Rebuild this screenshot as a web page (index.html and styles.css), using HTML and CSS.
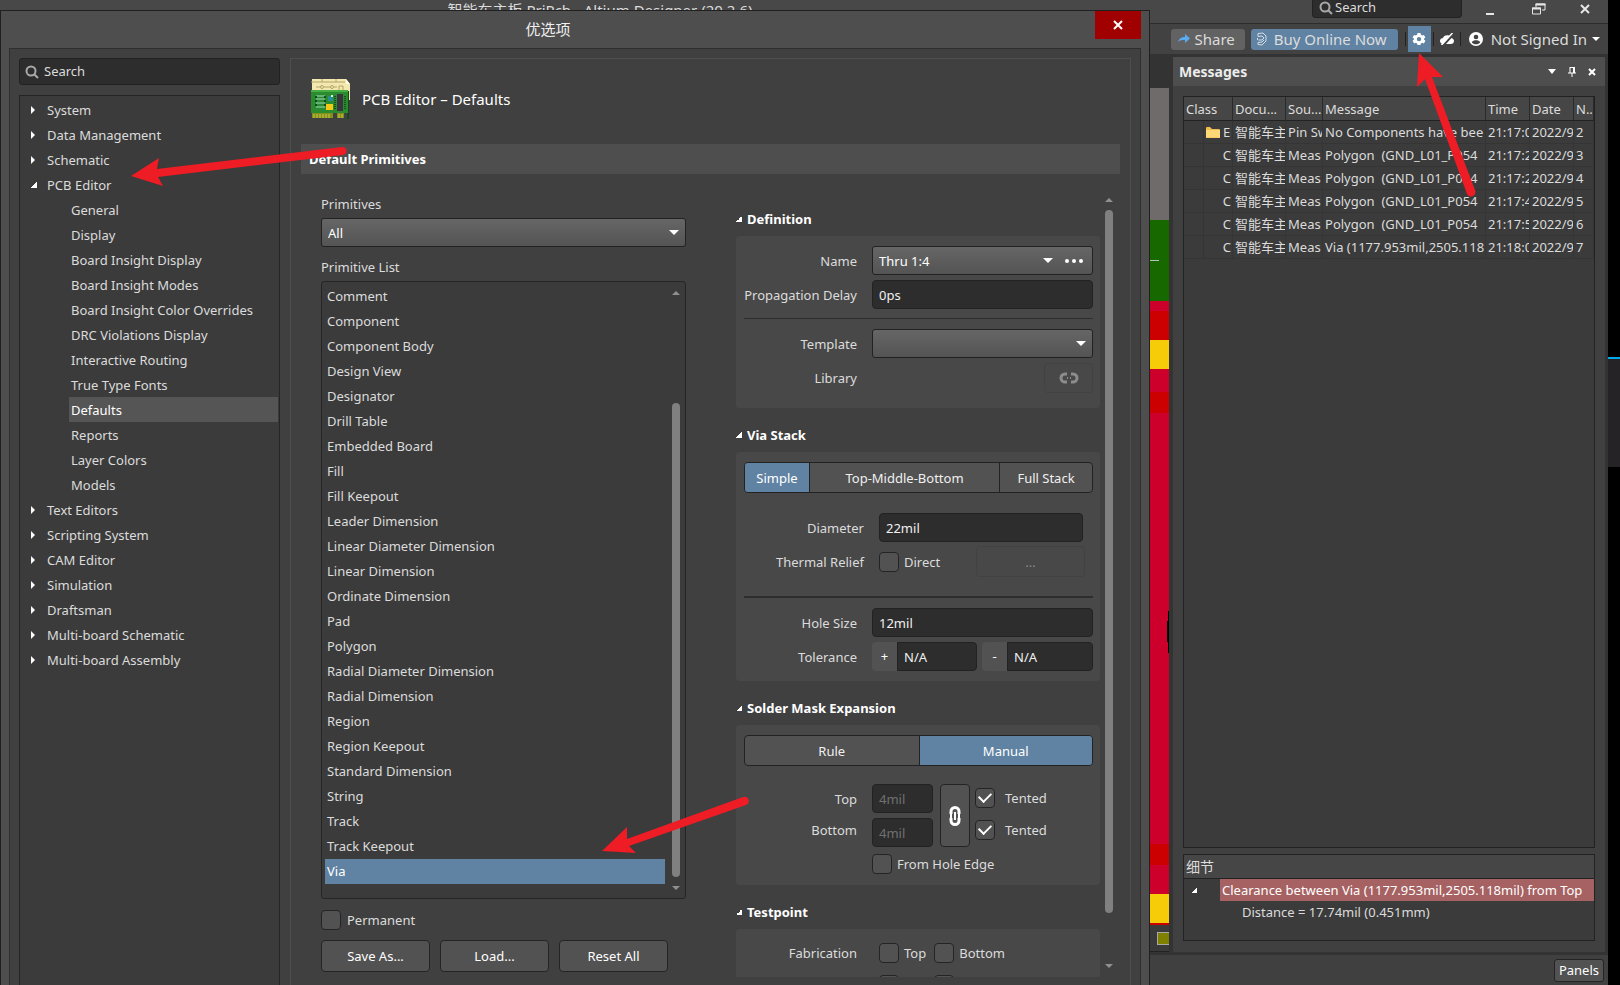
FILE: index.html
```html
<!DOCTYPE html>
<html lang="zh-CN">
<head>
<meta charset="utf-8">
<title>Altium Designer</title>
<link rel="stylesheet" href="styles.css">
</head>
<body>
<div class="desktop">
  <div class="app">
    <header class="titlebar">
      <div class="titlebar-text">智能车主板.PrjPcb - Altium Designer (20.2.6)</div>
      <div class="titlebar-side">
        <label class="app-search">
          <svg class="icon-search" viewBox="0 0 14 14" width="14" height="14"><circle cx="6" cy="6" r="4.5"/><path d="M9.2 9.2 13 13"/></svg>
          <input type="text" value="Search" aria-label="Search">
        </label>
        <button class="win-btn" aria-label="Minimize"><svg viewBox="0 0 12 12" width="12" height="12"><path d="M3 11h8" stroke="#e6e6e6" stroke-width="2"/></svg></button>
        <button class="win-btn" aria-label="Restore"><svg viewBox="0 0 14 12" width="14" height="12"><path d="M4 4V1h9v6h-3" class="win-line"/><path d="M3.500 1.500h10M0 5.500h9" stroke="#e6e6e6" stroke-width="2"/><path d="M.5 5h8v6h-8z" class="win-line"/></svg></button>
        <button class="win-btn" aria-label="Close"><svg viewBox="0 0 10 10" width="10" height="10"><path d="M1 1l8 8M9 1 1 9" stroke="#e6e6e6" stroke-width="2"/></svg></button>
      </div>
    </header>
    <div class="toolbar">
      <button class="tb-share"><svg viewBox="0 0 12 10" width="12" height="10"><path d="M0 8C1 4 4 3 7 3V0l5 4.500L7 9V6C4 6 2 6 0 8z" fill="#5aaaf0"/></svg>Share</button>
      <button class="tb-buy"><svg viewBox="0 0 12 14" width="12" height="14" fill="none" stroke="#d4dce4"><path d="M2 1.500 7 1l3 3v5l-4 4-4-.5"/><path d="M2 1.500v3l4-.5 2 2-2 2H2.500M2 12.500v-2l4-.5 2-2M1.500 6v2"/></svg>Buy Online Now</button>
      <span class="tb-sep"></span>
      <button class="tb-gear" aria-label="Settings"><svg viewBox="0 0 14 14" width="14" height="14"><path fill="#fff" fill-rule="evenodd" d="M5.500 1h3l.4 1.800 1.300.7 1.700-.6 1.500 2.600L12 6.700v.9l1.400 1.200-1.500 2.600-1.700-.6-1.300.7L8.500 13h-3l-.4-1.500-1.300-.7-1.700.6L.6 8.800 2 7.600v-.9L.6 5.500l1.500-2.600 1.700.6 1.300-.7zM7 4.900a2.200 2.200 0 1 0 0 4.400 2.200 2.200 0 0 0 0-4.400z"/></svg></button>
      <span class="tb-sep"></span>
      <button class="tb-icon" aria-label="Offline"><svg viewBox="0 0 14 12" width="14" height="12"><path fill="#fff" d="M0 8c0-2 1.500-3 3-3 .5-2 3-3.500 6-2.500l1 .5L3 11C1 11 0 9.500 0 8zM11.500 5C13 5.500 14 6.500 14 8c0 2-1.500 3-3 3H6z"/><path d="M1.500 12 12.500 0" stroke="#fff" stroke-width="1.500"/></svg></button>
      <span class="tb-sep"></span>
      <button class="tb-user"><svg viewBox="0 0 14 14" width="14" height="14"><circle cx="7" cy="7" r="7" fill="#fff"/><circle cx="7" cy="5" r="2.300" fill="#424242"/><path d="M2.800 10.200C3.600 8.600 5.200 8.200 7 8.200s3.400.4 4.200 2C10.200 11.600 8.700 12.200 7 12.200s-3.200-.6-4.200-2z" fill="#424242"/></svg><span>Not Signed In</span><i class="caret-down"></i></button>
    </div>
    <main class="workspace">
      <svg class="board" viewBox="0 0 19 898" preserveAspectRatio="none" aria-hidden="true">
        <rect width="19" height="898" fill="#333"/>
        <rect y="34" width="19" height="132" fill="#706b6b"/>
        <rect y="166" width="19" height="81" fill="#186800"/>
        <rect y="206" width="9" height="1" fill="#b5c4b0"/>
        <rect y="247" width="19" height="600" fill="#cc002b"/>
        <rect y="257" width="19" height="29" fill="#cc0000"/>
        <rect y="286" width="19" height="29" fill="#f6cc08"/>
        <rect y="338" width="19" height="21" fill="#cc0000"/>
        <path d="M19 557h-1v10h-1v21h1v11h1z" fill="#000"/>
        <rect y="790" width="19" height="21" fill="#cc0000"/>
        <rect y="840" width="19" height="30" fill="#f6cc08"/>
        <rect y="869" width="19" height="2" fill="#cc0000"/>
        <rect y="871" width="19" height="27" fill="#3a3a3a"/>
        <path d="M7 878h12v13H7z" fill="#a8a8a8"/><path d="M8 879h11v11H8z" fill="#808000"/>
        <rect y="897" width="19" height="1" fill="#222"/>
      </svg>
      <section class="messages">
        <div class="panel-head">
          <h2>Messages</h2>
          <button aria-label="Menu"><i class="caret-down small"></i></button>
          <button aria-label="Pin"><svg viewBox="0 0 8 10" width="8" height="10"><path d="M2 0.500h4.500V6M2 0v6M0 6h8M4 6v4" stroke="#fff" fill="none"/><path d="M5 0h2v6H5z" fill="#fff"/></svg></button>
          <button aria-label="Close"><svg viewBox="0 0 8 8" width="8" height="8"><path d="M1 1l6 6M7 1 1 7" stroke="#fff" stroke-width="2"/></svg></button>
        </div>
        <div class="msg-table-wrap">
          <table class="msg-table">
            <colgroup><col class="c-tick"><col class="c-class"><col class="c-doc"><col class="c-src"><col><col class="c-time"><col class="c-time"><col class="c-no"></colgroup>
            <thead><tr><th colspan="2">Class</th><th>Docu...</th><th>Sou...</th><th>Message</th><th>Time</th><th>Date</th><th>N..</th></tr></thead>
            <tbody>
              <tr><td></td><td class="cls"><div><svg viewBox="0 0 14 12" width="14" height="12"><path d="M0 2q0-1 1-1h3l2 2h7q1 0 1 1v8H0z" fill="#f0bc4e"/><path d="M0 4h14v7.500H0z" fill="#ffd877"/></svg><span>Er</span></div></td><td>智能车主</td><td>Pin Sw</td><td>No Components have bee</td><td>21:17:0</td><td>2022/9</td><td>2</td></tr>
              <tr><td></td><td class="cls"><div><span>C</span></div></td><td>智能车主</td><td>Meas</td><td>Polygon&nbsp; (GND_L01_P054</td><td>21:17:2</td><td>2022/9</td><td>3</td></tr>
              <tr><td></td><td class="cls"><div><span>C</span></div></td><td>智能车主</td><td>Meas</td><td>Polygon&nbsp; (GND_L01_P054</td><td>21:17:2</td><td>2022/9</td><td>4</td></tr>
              <tr><td></td><td class="cls"><div><span>C</span></div></td><td>智能车主</td><td>Meas</td><td>Polygon&nbsp; (GND_L01_P054</td><td>21:17:4</td><td>2022/9</td><td>5</td></tr>
              <tr><td></td><td class="cls"><div><span>C</span></div></td><td>智能车主</td><td>Meas</td><td>Polygon&nbsp; (GND_L01_P054</td><td>21:17:5</td><td>2022/9</td><td>6</td></tr>
              <tr><td></td><td class="cls"><div><span>C</span></div></td><td>智能车主</td><td>Meas</td><td>Via (1177.953mil,2505.118</td><td>21:18:0</td><td>2022/9</td><td>7</td></tr>
            </tbody>
          </table>
        </div>
        <div class="details">
          <div class="details-head">细节</div>
          <div class="details-row"><i class="tri-open"></i><span class="hit">Clearance between Via (1177.953mil,2505.118mil) from Top</span></div>
          <div class="details-sub">Distance = 17.74mil (0.451mm)</div>
        </div>
      </section>
    </main>
    <footer class="statusbar"><button>Panels</button></footer>

    <div class="dialog" role="dialog" aria-label="优选项">
      <div class="dialog-title"><span>优选项</span><button aria-label="Close"><svg viewBox="0 0 10 10" width="10" height="10"><path d="M1 1l8 8M9 1 1 9" stroke="#fff" stroke-width="2"/></svg></button></div>
      <div class="dialog-body">
        <nav class="side">
          <label class="side-search">
            <svg class="icon-search" viewBox="0 0 14 14" width="14" height="14"><circle cx="6" cy="6" r="4.500"/><path d="M9.200 9.200 13 13"/></svg>
            <input type="text" value="Search" aria-label="Search preferences">
          </label>
          <ul class="tree">
            <li class="node"><i class="tri-closed"></i>System</li>
            <li class="node"><i class="tri-closed"></i>Data Management</li>
            <li class="node"><i class="tri-closed"></i>Schematic</li>
            <li class="node"><i class="tri-open"></i>PCB Editor</li>
            <li class="leaf">General</li>
            <li class="leaf">Display</li>
            <li class="leaf">Board Insight Display</li>
            <li class="leaf">Board Insight Modes</li>
            <li class="leaf">Board Insight Color Overrides</li>
            <li class="leaf">DRC Violations Display</li>
            <li class="leaf">Interactive Routing</li>
            <li class="leaf">True Type Fonts</li>
            <li class="leaf selected">Defaults</li>
            <li class="leaf">Reports</li>
            <li class="leaf">Layer Colors</li>
            <li class="leaf">Models</li>
            <li class="node"><i class="tri-closed"></i>Text Editors</li>
            <li class="node"><i class="tri-closed"></i>Scripting System</li>
            <li class="node"><i class="tri-closed"></i>CAM Editor</li>
            <li class="node"><i class="tri-closed"></i>Simulation</li>
            <li class="node"><i class="tri-closed"></i>Draftsman</li>
            <li class="node"><i class="tri-closed"></i>Multi-board Schematic</li>
            <li class="node"><i class="tri-closed"></i>Multi-board Assembly</li>
          </ul>
        </nav>
        <section class="page">
          <div class="page-head">
            <svg viewBox="0 0 40 40" width="40" height="40" aria-hidden="true">
              <path d="M1 0h34l4 5v16H1z" fill="#f3e8b0"/><path d="M35 0l4 5h-4z" fill="#fffbe2"/>
              <path d="M0 3h34M11 0v3M25 0v3M5 8h5m3 0h7m3 0h3M28 11V7h4v4" stroke="#b5a667" fill="none"/>
              <circle cx="11" cy="8" r="1.500" fill="none" stroke="#b5a667"/><circle cx="21" cy="8" r="1.500" fill="none" stroke="#b5a667"/>
              <path d="M37 12h1v28h-2z" fill="#12481a"/>
              <path d="M0 11h37v23H0z" fill="#2a8b2f"/><path d="M0 11h37v2H0z" fill="#48b042"/>
              <path d="M1 34h21v5H1zM26 34h7v5h-7z" fill="#85901c"/>
              <path d="M3 35v4M6 35v4M9 35v4M12 35v4M15 35v4M18 35v4M28 35v4M31 35v4" stroke="#c9c748"/>
              <path d="M5 17h9M5 20h9M5 24h9M5 28h9" stroke="#9fd5c0"/><path d="M4 18h2m7 0h2M4 22h2m7 0h2M4 26h2m7 0h2" stroke="#0e4c1c" stroke-width="2"/>
              <path d="M17 17h5v5h-5z" fill="#2a8f92"/><path d="M20 16h2v2h-2z" fill="#d6efe8"/>
              <path d="M15 25h7v6h-7z" fill="#f4c916"/>
              <path d="M26 15h6v17h-6z" fill="#3b3540"/><path d="M24 17v14M34 17v14" stroke="#15501c" stroke-dasharray="1 1" stroke-width="2"/>
            </svg>
            <h1>PCB Editor – Defaults</h1>
          </div>
          <h2 class="bar">Default Primitives</h2>
          <div class="columns">
            <div class="left-col">
              <label class="cap" for="prim">Primitives</label>
              <span class="combo"><select id="prim"><option>All</option></select><i class="caret-down"></i></span>
              <div class="cap" id="pl">Primitive List</div>
              <div class="list">
                <ul role="listbox" aria-labelledby="pl">
                  <li>Comment</li><li>Component</li><li>Component Body</li><li>Design View</li><li>Designator</li><li>Drill Table</li><li>Embedded Board</li><li>Fill</li><li>Fill Keepout</li><li>Leader Dimension</li><li>Linear Diameter Dimension</li><li>Linear Dimension</li><li>Ordinate Dimension</li><li>Pad</li><li>Polygon</li><li>Radial Diameter Dimension</li><li>Radial Dimension</li><li>Region</li><li>Region Keepout</li><li>Standard Dimension</li><li>String</li><li>Track</li><li>Track Keepout</li><li class="selected">Via</li>
                </ul>
                <div class="scroll list-scroll"><i class="sc-up"></i><span class="thumb"></span><i class="sc-down"></i></div>
              </div>
              <label class="check permanent"><input type="checkbox">Permanent</label>
              <div class="actions"><button class="btn">Save As...</button><button class="btn">Load...</button><button class="btn">Reset All</button></div>
            </div>
            <div class="right-col">
              <div class="groups">
                <h3><i class="tri-open"></i>Definition</h3>
                <div class="group">
                  <div class="row"><label class="lbl" for="nm">Name</label><span class="combo grow"><select id="nm"><option>Thru 1:4</option></select><i class="caret-down"></i><button class="more" aria-label="More"><i></i><i></i><i></i></button></span></div>
                  <div class="row"><label class="lbl" for="pd">Propagation Delay</label><input class="field grow" id="pd" type="text" value="0ps"></div>
                  <hr>
                  <div class="row"><label class="lbl" for="tp">Template</label><span class="combo grow"><select id="tp"><option></option></select><i class="caret-down"></i></span></div>
                  <div class="row"><span class="lbl">Library</span><button class="ghost link" aria-label="Link library"><svg viewBox="0 0 20 12" width="20" height="12" fill="none" stroke="#8c8c8c" stroke-width="3"><path d="M8 2H6a4 4 0 0 0 0 8h2M12 2h2a4 4 0 0 1 0 8h-2"/><path d="M8 6h1M11 6h1" stroke-width="2"/></svg></button></div>
                </div>
                <h3><i class="tri-open"></i>Via Stack</h3>
                <div class="group via">
                  <div class="seg seg-stack"><button class="on">Simple</button><button>Top-Middle-Bottom</button><button>Full Stack</button></div>
                  <div class="row inset"><label class="lbl" for="di">Diameter</label><input class="field grow" id="di" type="text" value="22mil"></div>
                  <div class="row inset thermal"><span class="lbl">Thermal Relief</span><label class="check"><input type="checkbox">Direct</label><button class="ghost dots">...</button></div>
                  <hr class="thick">
                  <div class="row"><label class="lbl" for="hs">Hole Size</label><input class="field grow" id="hs" type="text" value="12mil"></div>
                  <div class="row"><span class="lbl">Tolerance</span><div class="tol grow"><label class="signed"><span>+</span><input class="field" type="text" value="N/A"></label><label class="signed"><span>-</span><input class="field" type="text" value="N/A"></label></div></div>
                </div>
                <h3><i class="tri-open"></i>Solder Mask Expansion</h3>
                <div class="group">
                  <div class="seg"><button>Rule</button><button class="on">Manual</button></div>
                  <div class="mask">
                    <div class="mask-labels"><label for="mt">Top</label><label for="mb">Bottom</label></div>
                    <div class="mask-fields"><input class="field" id="mt" type="text" value="4mil" disabled><input class="field" id="mb" type="text" value="4mil" disabled></div>
                    <button class="btn chain" aria-label="Link values"><svg viewBox="0 0 12 20" width="12" height="20" fill="none" stroke="#fff"><path stroke-width="3" d="M2 8V5.500a4 4 0 0 1 8 0V8M2 12v2.500a4 4 0 0 0 8 0V12"/><path stroke-width="2" d="M6 6v8M1 9h2M9 9h2M1 11h2M9 11h2"/></svg></button>
                    <div class="mask-checks"><label class="check"><input type="checkbox" checked>Tented</label><label class="check"><input type="checkbox" checked>Tented</label></div>
                  </div>
                  <div class="row edge"><span class="lbl"></span><label class="check"><input type="checkbox">From Hole Edge</label></div>
                </div>
                <h3><i class="tri-open"></i>Testpoint</h3>
                <div class="group test">
                  <div class="row"><span class="lbl">Fabrication</span><label class="check"><input type="checkbox">Top</label><label class="check"><input type="checkbox">Bottom</label></div>
                  <div class="row"><span class="lbl"></span><label class="check"><input type="checkbox" aria-label="Assembly top"></label><label class="check last"><input type="checkbox" aria-label="Assembly bottom"></label></div>
                </div>
              </div>
              <div class="scroll page-scroll"><i class="sc-up"></i><span class="thumb"></span><i class="sc-down"></i></div>
            </div>
          </div>
        </section>
      </div>
    </div>
    <svg class="arrow arrow-tree" viewBox="0 0 220 44" width="220" height="44" aria-hidden="true"><path d="M1 30 29 12 27 23 212 1A4 4 0 0 1 213 9L28 31 33 40z"/></svg>
    <svg class="arrow arrow-via" viewBox="0 0 150 60" width="150" height="60" aria-hidden="true"><path d="M1 54 26 30 26 42 142 0A4 4 0 0 1 145 8L28 49 35 56z"/></svg>
    <svg class="arrow arrow-gear" viewBox="0 0 62 146" width="62" height="146" aria-hidden="true"><path d="M4 1 28 25 17 25 60 138A4 4 0 0 1 52 142L10 27 2 35z"/></svg>
  </div>
  <aside class="edge-strip"><span></span></aside>
</div>
</body>
</html>
```
FILE: styles.css
```css
* { box-sizing: border-box; }
body { margin: 0; background: #000; color: #dcdcdc; font: 13px/18px "Noto Sans", "Noto Sans CJK SC", sans-serif; }
button, input, select { font: inherit; color: inherit; margin: 0; padding: 0; border: 0; background: none; }
ul { list-style: none; margin: 0; padding: 0; }
h1, h2, h3 { margin: 0; font-weight: 400; }
svg { display: block; flex: none; }

.desktop { display: flex; height: 100vh; overflow: hidden; }
.app { position: relative; flex: 1; min-width: 0; display: flex; flex-direction: column; background: #333; }
.edge-strip { width: 12px; padding-top: 357px; background: #000; }
.edge-strip span { display: block; height: 110px; border-top: 2px solid #00a8ec; background: #252326; }

/* application frame */
.titlebar { display: flex; height: 24px; background: #484848; border-bottom: 1px solid #2c2c2c; }
.titlebar-text { flex: 1; text-align: center; font-size: 15px; line-height: 20px; }
.titlebar-side { display: flex; width: 408px; padding-left: 112px; height: 18px; }
.app-search { display: flex; align-items: center; gap: 2px; width: 150px; padding: 0 6px; background: #2d2d2d; border: 1px solid #222; border-top: 0; border-radius: 0 0 4px 4px; }
.app-search input, .side-search input { flex: 1; min-width: 0; }
.app-search input { line-height: 14px; height: 14px; margin-bottom: 4px; }
.app-search svg { margin-bottom: 2px; }
.icon-search { fill: none; stroke: #a8a8a8; stroke-width: 2; }
.win-btn { width: 48px; display: flex; align-items: center; justify-content: center; }
.win-btn:first-of-type { width: 57px; }
.win-line { fill: none; stroke: #e6e6e6; }
.toolbar { display: flex; align-items: center; justify-content: flex-end; height: 30px; padding-right: 8px; background: #424242; font-size: 15px; }
.tb-share, .tb-buy { display: flex; align-items: center; height: 21px; border-radius: 3px; line-height: 21px; }
.tb-share { gap: 4px; padding: 0 10px 0 7px; margin-right: 6px; background: #626262; }
.tb-buy { gap: 6px; padding: 0 11px 0 5px; margin-right: 7px; background: #6083a3; }
.tb-sep { width: 1px; height: 14px; background: #222; }
.tb-gear { display: flex; align-items: center; justify-content: center; width: 23px; height: 26px; margin: 0 2px; background: #6083a3; }
.tb-icon { padding: 0 6px; }
.tb-user { display: flex; align-items: center; gap: 8px; padding-left: 8px; }
.tb-user .caret-down { border-width: 4px 4px 0; margin-left: -3px; }
.caret-down { flex: none; width: 0; border: solid transparent; border-width: 5px 5px 0; border-top-color: #fff; }
.caret-down.small { display: block; border-width: 5px 4px 0; }
.tri-open { flex: none; width: 6px; height: 6px; background: linear-gradient(135deg, transparent 50%, #fff 50%); }
.tri-closed { flex: none; width: 0; border: solid transparent; border-width: 4px 0 4px 4px; border-left-color: #fff; }

.workspace { flex: 1; min-height: 0; display: flex; justify-content: flex-end; padding-right: 3px; }
.board { width: 19px; height: 100%; margin-right: 4px; }
.messages { display: flex; flex-direction: column; width: 432px; margin-top: 3px; background: #404040; padding-bottom: 11px; }
.panel-head { display: flex; align-items: center; gap: 12px; height: 29px; padding: 0 9px 0 6px; background: #4e4e4e; }
.panel-head h2 { flex: 1; font-size: 14px; font-weight: 700; color: #ececec; }
.panel-head button { display: flex; align-items: center; }
.msg-table-wrap { flex: 1; margin: 10px 10px 6px; border: 1px solid #222; background: #3b3b3b; }
.msg-table { width: 100%; table-layout: fixed; border-collapse: separate; border-spacing: 0; }
.c-tick { width: 20px; } .c-class { width: 29px; } .c-doc { width: 53px; } .c-src { width: 37px; } .c-time { width: 44px; } .c-no { width: 20px; }
.msg-table th, .msg-table td { height: 23px; padding: 0 1px 0 2px; overflow: hidden; white-space: nowrap; text-align: left; font-weight: 400; line-height: 18px; }
.msg-table th { height: 24px; background: #464646; border-bottom: 1px solid #222; border-right: 1px solid #2a2a2a; }
.msg-table td { border: 1px solid #353535; border-width: 0 1px 1px 0; }
.msg-table .cls { padding: 0 1px; }
.cls div { display: flex; align-items: center; justify-content: flex-end; gap: 3px; width: 26px; }
.cls svg + span { width: 8px; overflow: hidden; }
.details { margin: 0 10px; height: 87px; border: 1px solid #222; background: #3b3b3b; white-space: nowrap; overflow: hidden; }
.details-head { height: 24px; padding-left: 2px; line-height: 23px; background: #464646; border-bottom: 1px solid #222; font-size: 14px; }
.details-row { display: flex; align-items: center; padding-left: 7px; }
.hit { flex: 1; margin-left: 23px; padding-left: 2px; line-height: 22px; background: #a66262; color: #fff; overflow: hidden; }
.details-sub { padding-left: 58px; line-height: 22px; }
.statusbar { display: flex; justify-content: flex-end; align-items: center; height: 33px; padding-right: 4px; background: #404040; border-top: 3px solid #333; }
.statusbar button { height: 23px; padding: 0 4px; border: 1px solid #242424; border-radius: 3px; background: #525252; color: #fff; line-height: 21px; }

/* preferences dialog floating over the application */
.dialog { position: absolute; left: 0; right: 458px; top: 10px; bottom: 0; display: flex; flex-direction: column; padding: 0 8px; background: #4e4e4e; border: 1px solid #202020; border-bottom: 0; }
.dialog-title { display: flex; height: 37px; }
.dialog-title span { flex: 1; padding-right: 8px; text-align: center; font-size: 15px; line-height: 36px; color: #f0f0f0; }
.dialog-title button { width: 46px; height: 28px; background: #a00000; display: flex; align-items: center; justify-content: center; }
.dialog-body { flex: 1; min-height: 0; display: flex; gap: 10px; padding: 9px 9px 0; background: #404040; border: 1px solid #2f2f2f; border-bottom: 0; }
.side { width: 261px; display: flex; flex-direction: column; gap: 10px; }
.side-search { display: flex; align-items: center; gap: 5px; height: 27px; padding: 0 5px; border: 1px solid #222; border-radius: 3px; background: #2d2d2d; }
.side-search input { height: 25px; padding-bottom: 2px; }
.tree { flex: 1; padding: 1px 1px 0 11px; border: 1px solid #252525; border-bottom: 0; background: #3b3b3b; }
.tree li { display: flex; align-items: center; height: 25px; }
.tree .node { gap: 12px; }
.tree .tri-open { margin-right: -2px; }
.leaf { margin-left: 38px; padding-left: 2px; }
.tree .selected { background: #555; color: #fff; }

.page { flex: 1; min-width: 0; display: flex; flex-direction: column; padding: 0 10px 8px; border: 1px solid #4e4e4e; border-bottom: 0; }
.page-head { display: flex; align-items: center; gap: 11px; height: 85px; padding: 0 0 6px 10px; }
.page-head h1 { font-size: 15px; color: #fff; }
.bar { height: 30px; padding-left: 8px; background: #4e4e4e; font-size: 13px; font-weight: 700; line-height: 30px; color: #fff; }
.columns { flex: 1; min-height: 0; display: flex; gap: 50px; }
.left-col { width: 385px; padding: 18px 0 0 20px; }
.cap { display: block; height: 26px; line-height: 24px; }
.combo + .cap { margin-top: 8px; }
.combo { display: flex; align-items: center; height: 29px; padding-right: 6px; border: 1px solid #222; border-radius: 3px; background: linear-gradient(#666, #545454); color: #fff; }
.combo select { flex: 1; min-width: 0; height: 27px; padding-left: 6px; appearance: none; }
.combo option { color: #000; }
.list { display: flex; border: 1px solid #252525; border-radius: 3px; background: #3b3b3b; padding: 2px 5px 14px 3px; }
.list ul { flex: 1; margin-right: 7px; }
.list li { height: 25px; padding-left: 2px; line-height: 24px; }
.list .selected { background: #6083a3; color: #fff; }
.scroll { display: flex; flex-direction: column; align-items: center; }
.scroll .thumb { width: 8px; border-radius: 4px; background: #808080; }
.sc-up, .sc-down { width: 0; border: solid transparent; }
.sc-up { border-width: 0 4px 4px; border-bottom-color: #909090; }
.sc-down { border-width: 4px 4px 0; border-top-color: #909090; }
.list-scroll { padding-top: 7px; margin-bottom: -6px; }
.list-scroll .thumb { flex: 1; margin: 108px 0 9px; }
.check { display: flex; align-items: center; gap: 5px; }
.check input { appearance: none; flex: none; width: 20px; height: 20px; border: 1px solid #242424; border-radius: 4px; background: #525252; display: grid; place-items: center; }
.check input:checked::after { content: ""; width: 10px; height: 6px; margin-bottom: 4px; border: solid #fff; border-width: 0 0 2px 2px; rotate: -45deg; }
.permanent { margin-top: 11px; gap: 6px; }
.actions { display: grid; grid-template-columns: repeat(3, 1fr); gap: 10px; margin: 10px 18px 0 0; }
.btn { border: 1px solid #242424; border-radius: 4px; background: #525252; color: #fff; height: 32px; }

.right-col { flex: 1; min-width: 0; display: flex; gap: 5px; padding-top: 18px; }
.groups { flex: 1; min-width: 0; overflow: hidden; }
.groups h3 { display: flex; align-items: center; gap: 5px; height: 44px; padding-top: 10px; font-size: 13px; font-weight: 700; color: #fff; }
.group { padding: 10px 7px 10px 8px; border-radius: 4px; background: #484848; }
.row { display: flex; align-items: center; min-height: 29px; margin-bottom: 5px; }
.lbl { width: 113px; margin-right: 15px; text-align: right; white-space: nowrap; }
.grow { flex: 1; min-width: 0; }
.field { height: 29px; padding: 0 6px; border: 1px solid #222; border-radius: 4px; background: #2d2d2d; color: #f0f0f0; min-width: 0; }
.field:disabled { color: #707070; }
.more { display: flex; gap: 3px; margin: 0 3px 0 12px; }
.more i { width: 4px; height: 4px; border-radius: 2px; background: #fff; }
hr { height: 1px; margin: 9px 0 10px; border: 0; background: #2d2d2d; }
hr.thick { height: 2px; margin: 20px 0 10px; }
.ghost { border: 1px solid #424242; border-radius: 4px; color: #888; }
.link { display: grid; place-items: center; width: 49px; height: 30px; margin-left: auto; }
.seg { display: grid; grid-template-columns: 1fr 1fr; height: 31px; border: 1px solid #222; border-radius: 4px; background: #525252; overflow: hidden; color: #f0f0f0; }
.seg-stack { grid-template-columns: 64px 1fr 93px; margin-bottom: 20px; }
.seg button + button { border-left: 1px solid #222; }
.seg .on { background: #6083a3; color: #fff; }
.inset .lbl { width: 120px; }
.inset .field { margin-right: 10px; }
.thermal { height: 29px; margin-bottom: 0; }
.dots { width: 109px; height: 31px; margin: 0 8px 0 auto; }
.via { padding-bottom: 5px; }
.tol { display: grid; grid-template-columns: 105px 1fr; gap: 5px; }
.signed { display: flex; min-width: 0; }
.signed span { width: 25px; line-height: 29px; text-align: center; background: #525252; border-radius: 4px 0 0 4px; color: #fff; }
.signed .field { flex: 1; border-radius: 0 4px 4px 0; }
.mask { display: flex; margin: 18px 0 7px; }
.mask-labels { display: flex; flex-direction: column; width: 113px; margin-right: 15px; padding-top: 6px; gap: 13px; text-align: right; }
.mask-fields { display: flex; flex-direction: column; gap: 5px; width: 61px; }
.chain { display: grid; place-items: center; width: 30px; height: 63px; margin: 0 5px 0 7px; }
.mask-checks { display: flex; flex-direction: column; gap: 12px; padding-top: 4px; }
.mask-checks .check { gap: 10px; }
.edge { min-height: 20px; margin-bottom: 1px; }
.test { height: 100px; padding-top: 8px; }
.test .row { min-height: 32px; margin: 0; }
.test .lbl { margin-right: 22px; }
.test .check + .check { margin-left: 8px; }
.test .check + .last { margin-left: 35px; }
.page-scroll { padding: 6px 7px 9px 0; }
.page-scroll .thumb { flex: 1; margin: 8px 0 51px; }

/* annotation arrows drawn over everything */
.arrow { position: absolute; fill: #ee1c24; pointer-events: none; }
.arrow-tree { left: 130px; top: 146px; }
.arrow-via { left: 601px; top: 797px; }
.arrow-gear { right: 131px; top: 52px; }
```
